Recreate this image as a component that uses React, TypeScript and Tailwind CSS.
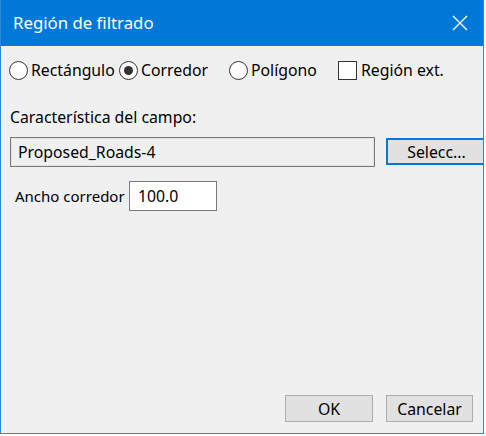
import React from 'react';

const font = { fontFamily: '"Noto Sans", "Open Sans", sans-serif' };

const Radio = ({ label, checked, width }: { label: string; checked?: boolean; width: string }) => (
	<label className={`flex items-center gap-[3px] ${width}`}>
		<span className="flex h-[19px] w-[19px] items-center justify-center rounded-full border border-[#333333] bg-white">
			{checked && <span className="h-[9px] w-[9px] rounded-full bg-[#333333]" />}
		</span>
		<span>{label}</span>
	</label>
);

export default function App() {
	return (
		<div
			className="h-[436px] w-[486px] bg-white text-[15.8px] leading-[20px] text-[#000000]"
			style={font}>
			<div className="flex h-[434px] w-[484px] flex-col border-x border-b border-[#2a8ad8] bg-[#f0f0f0]">
				<div className="flex h-[46px] shrink-0 items-center justify-between bg-[#0078d7] pl-[12px] pr-[14px] text-white">
					<span className="text-[16.8px]">Región de filtrado</span>
					<svg width="16" height="16" viewBox="0 0 16 16" className="mr-[1px]">
						<path d="M1 1 L15 15 M15 1 L1 15" stroke="white" strokeWidth="1.3" />
					</svg>
				</div>
				<div className="flex flex-1 flex-col">
					<div className="mt-[14px] flex items-center pl-[8px]">
						<Radio label="Rectángulo" width="w-[110px]" />
						<Radio label="Corredor" checked width="w-[110px]" />
						<Radio label="Polígono" width="w-[109px]" />
						<label className="flex items-center gap-[4px]">
							<span className="h-[19px] w-[19px] border border-[#333333] bg-white" />
							<span>Región ext.</span>
						</label>
					</div>
					<div className="mt-[27px] pl-[9px]">Característica del campo:</div>
					<div className="mt-[10px] flex items-start">
						<div className="ml-[9px] flex h-[30px] w-[365px] items-center border border-[#7a7a7a] bg-[#f0f0f0] pl-[7px] shadow-[inset_0_0_0_1px_#e3e3e3]">
							Proposed_Roads-4
						</div>
						<button className="ml-[11px] mt-[1px] flex h-[27px] flex-1 items-center justify-center border-2 border-r-0 border-[#0078d7] bg-[#e1e1e1] pl-[2px]">
							Selecc...
						</button>
					</div>
					<div className="mt-[14px] flex items-center">
						<span className="ml-[14px] w-[114px] whitespace-nowrap text-[15px]">Ancho corredor</span>
						<div className="flex h-[30px] w-[88px] items-center border border-[#7a7a7a] bg-white pl-[8px]">
							100.0
						</div>
					</div>
					<div className="mt-auto mb-[11px] flex justify-end gap-[13px] pr-[10px]">
						<button className="h-[27px] w-[88px] border border-[#adadad] bg-[#e1e1e1]">OK</button>
						<button className="h-[27px] w-[87px] border border-[#adadad] bg-[#e1e1e1]">Cancelar</button>
					</div>
				</div>
			</div>
		</div>
	);
}
